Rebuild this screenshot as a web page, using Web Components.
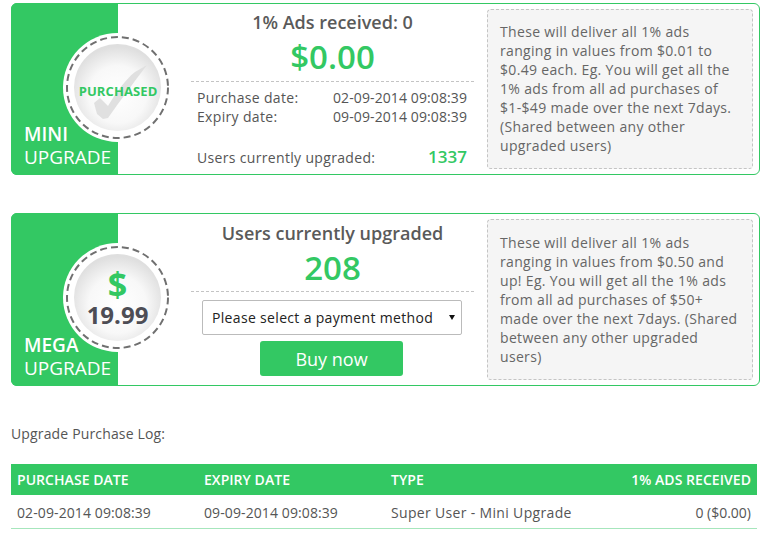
<!DOCTYPE html>
<html>
<head>
<meta charset="utf-8">
<title>Upgrade</title>
<style>
  html, body { margin: 0; background: #fff; }
  body { font-family: "Open Sans", sans-serif; font-size: 14px; color: #555; width: 766px; height: 541px; overflow: hidden; letter-spacing: .33px; }
  main { display: block; padding: 3px 0 0 11px; }
  upgrade-card + upgrade-card { margin-top: 38px; height: 173px; }
</style>
</head>
<body>
<main>
  <upgrade-card name="MINI">
    <upgrade-badge slot="badge" purchased></upgrade-badge>
    <ads-summary></ads-summary>
    <span slot="note">These will deliver all 1% ads ranging in values from $0.01 to $0.49 each. Eg. You will get all the 1% ads from all ad purchases of $1-$49 made over the next 7days. (Shared between any other upgraded users)</span>
  </upgrade-card>
  <upgrade-card name="MEGA">
    <upgrade-badge slot="badge" price="19.99"></upgrade-badge>
    <buy-panel></buy-panel>
    <span slot="note">These will deliver all 1% ads ranging in values from $0.50 and up! Eg. You will get all the 1% ads from all ad purchases of $50+ made over the next 7days. (Shared between any other upgraded users)</span>
  </upgrade-card>
  <purchase-log></purchase-log>
</main>

<script>
class UpgradeCard extends HTMLElement {
  constructor() {
    super();
    this.attachShadow({ mode: "open" });
    this.shadowRoot.innerHTML = `
    <style>
      :host { display: block; width: 749px; box-sizing: border-box; height: 172px; border: 1px solid #33c863; border-radius: 6px; position: relative; }
      .card { display: flex; height: 100%; }
      .side { width: 107px; margin: -1px 0 -1px -1px; padding: 0 0 6px 13px; box-sizing: border-box; flex: none; background: #33c863; border-radius: 6px 0 0 6px; color: #fff; display: flex; flex-direction: column; justify-content: flex-end; font-size: 19px; line-height: 23px; letter-spacing: 0; }
      .name { font-weight: 600; }
      .main { flex: none; width: 283px; margin-left: 73px; }
      .note { margin: 5px 0 5px 13px; box-sizing: border-box; width: 266px; padding: 0 12px 1px; display: flex; align-items: center; background: #f5f5f5; border: 1px dashed #c4c4c4; border-radius: 4px; color: #666; line-height: 19px; }
      ::slotted([slot="badge"]) { position: absolute; left: 51px; top: 29px; }
    </style>
    <div class="card">
      <div class="side"><span class="name"></span><span>UPGRADE</span></div>
      <slot name="badge"></slot>
      <div class="main"><slot></slot></div>
      <div class="note"><div><slot name="note"></slot></div></div>
    </div>`;
  }

  connectedCallback() {
    this.shadowRoot.querySelector(".name").textContent = this.getAttribute("name");
  }
}

class UpgradeBadge extends HTMLElement {
  constructor() {
    super();
    this.attachShadow({ mode: "open" });
    this.shadowRoot.innerHTML = `
    <style>
      :host { display: block; width: 109px; height: 109px; border-radius: 50%; background: #fff; position: relative; letter-spacing: 0; }
      svg { position: absolute; left: 0; top: 0; }
      .text { position: absolute; inset: 0; display: flex; flex-direction: column; align-items: center; justify-content: center; }
      .stamp { color: #33c863; font-size: 13px; font-weight: 700; margin: 6px 0 0 1px; letter-spacing: .1px; }
      .dollar { color: #33c863; font-size: 34px; font-weight: 700; line-height: 34px; }
      .price { color: #4d4d55; font-size: 24px; font-weight: 700; line-height: 28px; }
    </style>
    <svg width="109" height="109" viewBox="0 0 109 109">
      <defs>
        <radialGradient id="face" cx="50%" cy="58%" r="55%">
          <stop offset="0" stop-color="#fff"/>
          <stop offset=".6" stop-color="#f8f8f8"/>
          <stop offset="1" stop-color="#dfdfdf"/>
        </radialGradient>
      </defs>
      <circle cx="54.5" cy="54.5" r="43.5" fill="url(#face)"/>
      <circle cx="54.5" cy="54.5" r="50.5" fill="none" stroke="#707070" stroke-width="2" stroke-dasharray="7 4"/>
      <path class="tick" d="M31 70 L37 65 L45 73 C54 58 63 46 72 39 L84 32 C72 48 58 66 45 85 L40 86 L34 81 Z" fill="#e0e0e0"/>
    </svg>
    <div class="text"></div>`;
  }

  connectedCallback() {
    const text = this.shadowRoot.querySelector(".text");
    const tick = this.shadowRoot.querySelector(".tick");
    if (this.hasAttribute("purchased")) {
      text.innerHTML = `<span class="stamp">PURCHASED</span>`;
    } else {
      tick.remove();
      text.innerHTML = `<span class="dollar">$</span><span class="price">${this.getAttribute("price")}</span>`;
    }
  }
}

class AdsSummary extends HTMLElement {
  constructor() {
    super();
    this.attachShadow({ mode: "open" });
    this.shadowRoot.innerHTML = `
    <style>
      :host { display: block; color: #555; }
      h2 { margin: 6px 0 0; text-align: center; font-size: 18px; line-height: 24px; font-weight: 600; letter-spacing: 0; color: #5a5a5a; }
      .total { text-align: center; color: #33c863; font-size: 33px; font-weight: 600; line-height: 46px; height: 47px; letter-spacing: 0; }
      .rows { border-top: 1px dashed #c4c4c4; padding: 6px 7px 0 6px; line-height: 19px; }
      .row { display: flex; justify-content: space-between; }
      .row span + span, .users b { letter-spacing: .1px; }
      .users { display: flex; justify-content: space-between; align-items: baseline; margin-top: 21px; }
      .users b { color: #33c863; font-size: 17px; font-weight: 600; letter-spacing: 0; }
    </style>
    <h2>1% Ads received: 0</h2>
    <div class="total">$0.00</div>
    <div class="rows">
      <div class="row"><span>Purchase date:</span><span>02-09-2014 09:08:39</span></div>
      <div class="row"><span>Expiry date:</span><span>09-09-2014 09:08:39</span></div>
      <div class="users"><span>Users currently upgraded:</span><b>1337</b></div>
    </div>`;
  }
}

class BuyPanel extends HTMLElement {
  constructor() {
    super();
    this.attachShadow({ mode: "open" });
    this.shadowRoot.innerHTML = `
    <style>
      :host { display: block; color: #555; }
      h2 { margin: 7px 0 0; text-align: center; font-size: 18px; line-height: 25px; font-weight: 600; letter-spacing: 0; color: #5a5a5a; }
      .count { text-align: center; color: #33c863; font-size: 33px; font-weight: 600; line-height: 44px; height: 45px; letter-spacing: 0; }
      .buy { border-top: 1px dashed #c4c4c4; display: flex; flex-direction: column; align-items: flex-start; padding: 8px 0 0 11px; }
      .pick { position: relative; width: 260px; height: 35px; }
      .pick::after { content: ""; position: absolute; right: 7px; top: 15px; border: 3.5px solid transparent; border-top: 5px solid #111; border-bottom: 0; pointer-events: none; }
      select { appearance: none; width: 100%; height: 100%; box-sizing: border-box; font: 14px "Open Sans", sans-serif; letter-spacing: .33px; color: #222; background: #fff; border: 1px solid #bbb; border-radius: 2px; padding: 0 9px; }
      button { margin: 6px 0 0 58px; width: 143px; height: 35px; border: 0; border-radius: 3px; background: #33c863; color: #fff; font: 18px "Open Sans", sans-serif; }
    </style>
    <h2>Users currently upgraded</h2>
    <div class="count">208</div>
    <div class="buy">
      <div class="pick"><select><option>Please select a payment method</option></select></div>
      <button>Buy now</button>
    </div>`;
  }
}

class PurchaseLog extends HTMLElement {
  constructor() {
    super();
    this.attachShadow({ mode: "open" });
    this.shadowRoot.innerHTML = `
    <style>
      :host { display: block; width: 746px; margin-top: 38px; color: #555; }
      p { margin: 0 0 21px; line-height: 19px; letter-spacing: .15px; }
      .row { display: grid; grid-template-columns: 187px 187px 1fr auto; padding: 0 6px; align-items: center; }
      .head { height: 31px; background: #33c863; color: #fff; font-weight: 600; letter-spacing: .05px; }
      .body { height: 34px; box-sizing: border-box; padding-top: 1px; border-bottom: 1px solid #a6e6bc; }
      .date { letter-spacing: .1px; }
      .num { letter-spacing: 0; }
    </style>
    <p>Upgrade Purchase Log:</p>
    <div class="row head"><span>PURCHASE DATE</span><span>EXPIRY DATE</span><span>TYPE</span><span>1% ADS RECEIVED</span></div>
    <div class="row body"><span class="date">02-09-2014 09:08:39</span><span class="date">09-09-2014 09:08:39</span><span>Super User - Mini Upgrade</span><span class="num">0 ($0.00)</span></div>`;
  }
}

customElements.define("upgrade-card", UpgradeCard);
customElements.define("upgrade-badge", UpgradeBadge);
customElements.define("ads-summary", AdsSummary);
customElements.define("buy-panel", BuyPanel);
customElements.define("purchase-log", PurchaseLog);
</script>
</body>
</html>
